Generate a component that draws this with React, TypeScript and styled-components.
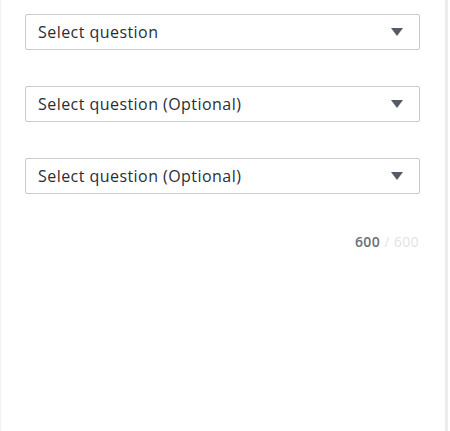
import React from "react";
import styled, { createGlobalStyle } from "styled-components";

const Global = createGlobalStyle`
  html, body { margin: 0; padding: 0; background: #ffffff; }
  body { font-family: "Open Sans", "Liberation Sans", Arial, sans-serif; }
`;

const Page = styled.div`
  width: 450px;
  height: 431px;
  display: flex;
  background: #ffffff;
`;

const Panel = styled.div`
  width: 448px;
  height: 431px;
  box-sizing: border-box;
  border-left: 1px solid #f0f0f0;
  border-right: 3px solid #ececec;
  padding: 14px 25px 0 24px;
  display: flex;
  flex-direction: column;
  gap: 36px;
`;

const Select = styled.div`
  height: 36px;
  box-sizing: border-box;
  border: 1px solid #c9cccc;
  border-radius: 2px;
  display: flex;
  align-items: center;
  justify-content: space-between;
  padding: 0 16px 0 12px;
  color: #2a2e33;
  font-size: 16px;
  font-weight: 500;
  letter-spacing: 0.45px;
`;

const Label = styled.span`
  line-height: 20px;
`;

const Arrow = styled.svg`
  width: 12px;
  height: 8px;
  fill: #545b64;
`;

const Counter = styled.div`
  align-self: flex-end;
  font-size: 14px;
  line-height: 24px;
  letter-spacing: 0.4px;
  padding-right: 1px;
  color: #687078;
  font-weight: 600;
`;

const Max = styled.span`
  color: #e1e4e6;
  font-weight: 400;
`;

const items = ["Select question", "Select question (Optional)", "Select question (Optional)"];

export default function App() {
  return (
    <Page>
      <Global />
      <Panel>
        {items.map((t, i) => (
          <Select key={i}>
            <Label>{t}</Label>
            <Arrow viewBox="0 0 12 8">
              <polygon points="0,0 12,0 6,8" />
            </Arrow>
          </Select>
        ))}
        <Counter>
          600 <Max>/ 600</Max>
        </Counter>
      </Panel>
    </Page>
  );
}
